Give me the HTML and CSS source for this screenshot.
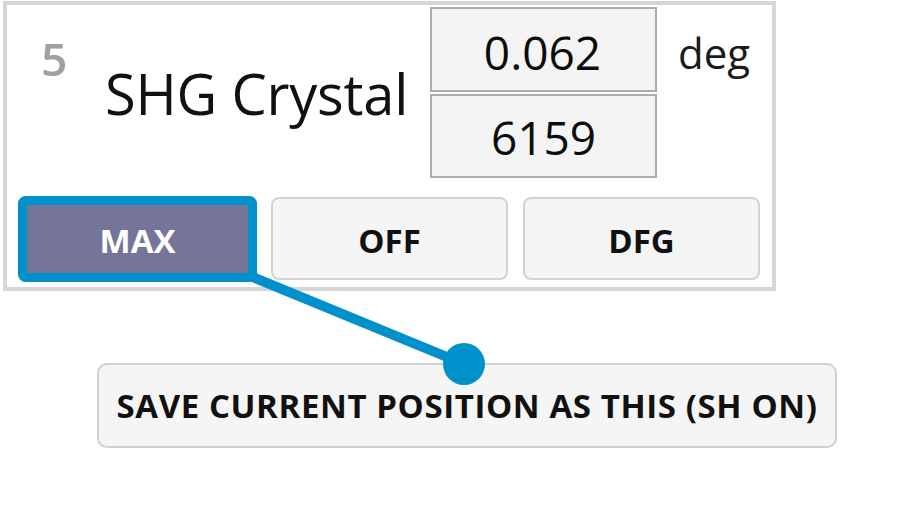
FILE: index.html
```html
<!DOCTYPE html>
<html>
<head>
<meta charset="utf-8">
<link rel="stylesheet" href="styles.css">
</head>
<body>
<div class="page">
  <div class="panel">
    <div class="top">
      <div class="idx">5</div>
      <div class="title">SHG Crystal</div>
      <div class="readouts">
        <div class="field field-angle">0.062</div>
        <div class="field field-steps">6159</div>
      </div>
      <div class="unit">deg</div>
    </div>
    <div class="buttons">
      <div class="btn btn-active">MAX</div>
      <div class="btn">OFF</div>
      <div class="btn">DFG</div>
    </div>
  </div>
  <div class="save">SAVE CURRENT POSITION AS THIS (SH ON)</div>
  <svg class="annot" width="902" height="511" viewBox="0 0 902 511">
    <line x1="250" y1="276" x2="464" y2="364" stroke="#0091cc" stroke-width="10"/>
    <rect x="22.5" y="200.5" width="230" height="77" rx="3" fill="none" stroke="#0091cc" stroke-width="9"/>
    <circle cx="464" cy="364" r="21" fill="#0091cc"/>
  </svg>
</div>
</body>
</html>
```
FILE: styles.css
```css
html, body {
  margin: 0;
  padding: 0;
  background: #ffffff;
}
.page {
  position: relative;
  width: 902px;
  height: 511px;
  font-family: "Open Sans", "Noto Sans", sans-serif;
  color: #111;
  display: flex;
  flex-direction: column;
  align-items: flex-start;
}
.panel {
  box-sizing: border-box;
  margin: 1px 0 0 3px;
  width: 773px;
  height: 290px;
  border: 4px solid #d6d6d6;
  display: flex;
  flex-direction: column;
}
.top {
  display: flex;
  align-items: flex-start;
  padding-top: 2px;
  height: 171px;
}
.idx {
  box-sizing: border-box;
  width: 97px;
  padding-left: 34px;
  margin-top: 28px;
  font-size: 46px;
  font-weight: 600;
  line-height: 1;
  color: #a0a0a0;
}
.title {
  width: 326px;
  margin-top: 58px;
  font-size: 56px;
  line-height: 1;
  white-space: nowrap;
  padding-left: 1px;
  box-sizing: border-box;
  letter-spacing: -0.2px;
}
.readouts {
  width: 227px;
  display: flex;
  flex-direction: column;
  gap: 2px;
}
.field {
  box-sizing: border-box;
  border: 2px solid #acacac;
  background: #f4f4f4;
  display: flex;
  align-items: center;
  justify-content: center;
  font-size: 46px;
  line-height: 1;
  color: #0c0c0c;
}
.field-angle {
  height: 85px;
  padding-top: 5px;
  padding-right: 2px;
}
.field-steps {
  height: 84px;
  padding-top: 2px;
}
.unit {
  margin-left: 21px;
  margin-top: 25px;
  font-size: 42px;
  line-height: 1;
  color: #1a1a1a;
}
.buttons {
  display: flex;
  gap: 15px;
  margin-top: 19px;
  padding-left: 12px;
}
.btn {
  box-sizing: border-box;
  width: 237px;
  height: 83px;
  border: 2px solid #d2d2d2;
  border-radius: 8px;
  background: #f5f5f5;
  display: flex;
  align-items: center;
  justify-content: center;
  padding-top: 4px;
  font-size: 33px;
  font-weight: 700;
  line-height: 1;
  color: #111;
}
.btn-active {
  background: #75759a;
  border-color: #75759a;
  color: #ffffff;
}
.save {
  box-sizing: border-box;
  margin: 72px 0 0 97px;
  width: 740px;
  height: 85px;
  border: 2px solid #d0d0d0;
  border-radius: 10px;
  background: #f5f5f5;
  display: flex;
  align-items: center;
  justify-content: center;
  font-size: 33px;
  font-weight: 700;
  letter-spacing: 0.6px;
  line-height: 1;
  color: #111;
  white-space: nowrap;
}
.annot {
  position: absolute;
  left: 0;
  top: 0;
  pointer-events: none;
}
```
